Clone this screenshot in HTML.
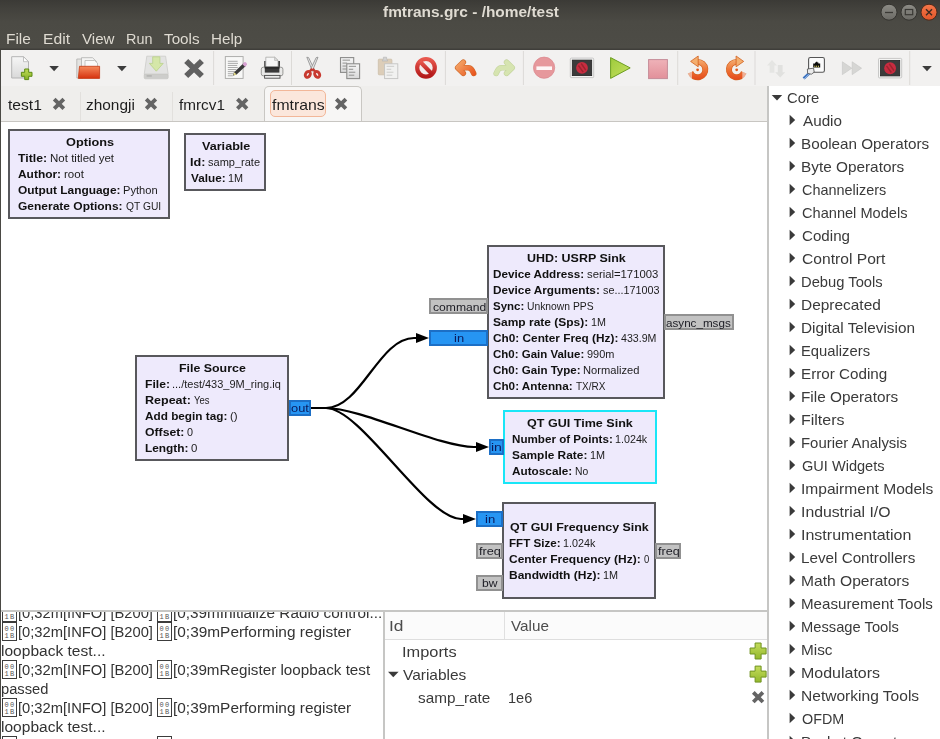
<!DOCTYPE html>
<html>
<head>
<meta charset="utf-8">
<title>fmtrans.grc - /home/test</title>
<style>
html,body{margin:0;padding:0;}
html{overflow:hidden;width:940px;height:739px;}
#root{position:absolute;left:0;top:0;width:940px;height:739px;overflow:hidden;}
body{width:940px;height:739px;position:relative;overflow:hidden;background:#f2f1f0;font-family:"Liberation Sans",sans-serif;}
.a{position:absolute;}
.tx{position:absolute;white-space:pre;line-height:20px;transform-origin:0 0;font-family:"Liberation Sans",sans-serif;}
.tx b{font-weight:bold;}
#titlebar{left:0;top:0;width:940px;height:50px;background:linear-gradient(#3b3a36 0px,#42413c 8px,#4b4a44 22px,#4d4c46 47.5px,#3f3e3a 49.5px,#3d3c38 50px);}
#toolbar{left:0;top:50px;width:940px;height:36px;background:#f2f1f0;}
#tabbar{left:0;top:86px;width:768px;height:35px;background:#efeeec;}
#tabline{left:0;top:121px;width:768px;height:1px;background:#c8c6c2;}
#canvas{left:1px;top:122px;width:766px;height:488px;background:#fff;}
#leftedge{left:0;top:50px;width:1px;height:689px;background:#4a4944;}
.blk{box-sizing:border-box;background:#eeeafc;border:2px solid #58585c;}
.port{box-sizing:border-box;}
.pb{background:#2695f3;border:2px solid #1c6fc6;}
.pg{background:#c2c2c2;border:2px solid #919191;}
#right{left:769px;top:86px;width:171px;height:653px;background:#fff;}
#rightline{left:767px;top:86px;width:2px;height:653px;background:#c6c6c4;}
#hline{left:1px;top:610px;width:766px;height:2px;background:#c6c6c4;}
#console{left:1px;top:612px;width:382px;height:127px;background:#fff;overflow:hidden;}
#vars{left:385px;top:612px;width:382px;height:127px;background:#fff;}
#varhead{left:385px;top:612px;width:382px;height:27px;background:#fbfbfb;border-bottom:1px solid #dedede;}
.sep{width:1px;top:51px;height:34px;background:#dddbd8;}
.hb{box-sizing:border-box;border:1.2px solid #3c3c3c;width:14.8px;height:18.6px;}
.hb i{position:absolute;left:0;width:12.4px;text-align:center;font-style:normal;font-family:"Liberation Mono",monospace;font-size:7px;line-height:6px;color:#555;letter-spacing:1.4px;padding-left:1.2px;box-sizing:border-box;}
</style>
</head>
<body>
<div id="root">
<div id="titlebar" class="a"></div>
<div id="toolbar" class="a"></div>
<div id="tabbar" class="a"></div>
<div id="tabline" class="a"></div>
<!-- active tab -->
<div class="a" style="left:264px;top:86px;width:98px;height:35px;box-sizing:border-box;background:#f7f6f5;border:1px solid #c9c7c3;border-bottom:none;border-radius:5px 5px 0 0"></div>
<div class="a" style="left:270px;top:90px;width:56px;height:27px;box-sizing:border-box;background:#fbe7dc;border:1px solid #f2b799;border-radius:5px"></div>
<div class="a" style="left:80px;top:92px;width:1px;height:29px;background:#e2e0dd"></div>
<div class="a" style="left:172px;top:92px;width:1px;height:29px;background:#e2e0dd"></div>
<div id="canvas" class="a"></div>
<div id="hline" class="a"></div>

<!-- blocks -->
<div class="a blk" style="left:8px;top:129px;width:162px;height:90px"></div>
<div class="a blk" style="left:184px;top:133px;width:82px;height:58px"></div>
<div class="a blk" style="left:135px;top:355px;width:154px;height:106px"></div>
<div class="a blk" style="left:487px;top:245px;width:178px;height:154px"></div>
<div class="a blk" style="left:503px;top:410px;width:154px;height:74px;border-color:#19e6f7"></div>
<div class="a blk" style="left:502px;top:502px;width:154px;height:97px"></div>
<!-- ports -->
<div class="a port pb" style="left:289px;top:400px;width:22px;height:16px"></div>
<div class="a port pg" style="left:429px;top:298px;width:59px;height:16px"></div>
<div class="a port pb" style="left:429px;top:330px;width:59px;height:16px"></div>
<div class="a port pg" style="left:664px;top:314px;width:70px;height:16px"></div>
<div class="a port pb" style="left:489px;top:439px;width:15px;height:16px"></div>
<div class="a port pb" style="left:476px;top:511px;width:27px;height:16px"></div>
<div class="a port pg" style="left:476px;top:543px;width:27px;height:16px"></div>
<div class="a port pg" style="left:476px;top:575px;width:27px;height:16px"></div>
<div class="a port pg" style="left:655px;top:543px;width:26px;height:16px"></div>
<!-- connections -->
<svg class="a" style="left:0;top:0" width="940" height="739" viewBox="0 0 940 739">
<g fill="none" stroke="#000" stroke-width="2.2">
<path d="M311 408 L326 408 C361 408 379 338 414 338 L417 338"/>
<path d="M311 408 L326 408 C361 408 439 447 474 447 L477 447"/>
<path d="M311 408 L326 408 C361 408 426 519 461 519 L464 519"/>
</g>
<g fill="#000">
<path d="M416 333 L429 338 L416 343 Z"/>
<path d="M476 442 L489 447 L476 452 Z"/>
<path d="M463 514 L476 519 L463 524 Z"/>
</g>
<!--DEBUG-->
</svg>

<!-- right tree panel -->
<div id="right" class="a"></div>
<div id="rightline" class="a"></div>
<!-- bottom panels -->
<div id="console" class="a"></div>
<div class="a" style="left:383px;top:611px;width:2px;height:128px;background:#c6c6c4"></div>
<div id="vars" class="a"></div>
<div id="varhead" class="a"></div>
<div class="a" style="left:504px;top:611px;width:1px;height:28px;background:#e0e0e0"></div>
<div id="leftedge" class="a"></div>

<svg class="a" style="left:870px;top:0" width="70" height="27" viewBox="870 0 70 27">
<defs>
<linearGradient id="gb" x1="0" y1="0" x2="0" y2="1"><stop offset="0" stop-color="#8d8c86"/><stop offset="1" stop-color="#6b6a65"/></linearGradient>
<linearGradient id="gc" x1="0" y1="0" x2="0" y2="1"><stop offset="0" stop-color="#f4774a"/><stop offset="1" stop-color="#e2562a"/></linearGradient>
</defs>
<circle cx="889" cy="12.2" r="8" fill="url(#gb)" stroke="#34332f" stroke-width="1"/>
<circle cx="909" cy="12.2" r="8" fill="url(#gb)" stroke="#34332f" stroke-width="1"/>
<circle cx="929" cy="12.2" r="8" fill="url(#gc)" stroke="#4a2a1c" stroke-width="1"/>
<path d="M885 12.5 H893" stroke="#3a3935" stroke-width="1.3" fill="none"/>
<rect x="905.3" y="9.5" width="7.4" height="5.2" fill="none" stroke="#3a3935" stroke-width="1.2"/>
<path d="M926 9.2 L932 15.2 M932 9.2 L926 15.2" stroke="#3a2a22" stroke-width="1.4" fill="none"/>
</svg>
<svg class="a" style="left:768px;top:86px" width="40" height="653" viewBox="768 86 40 653"><g fill="#3a3a3a"><path d="M771.7 95 L782.2 95 L777 100.4 Z"/><path d="M789.6 114.7 L795.2 120 L789.6 125.3 Z"/><path d="M789.6 137.7 L795.2 143 L789.6 148.3 Z"/><path d="M789.6 160.7 L795.2 166 L789.6 171.3 Z"/><path d="M789.6 183.7 L795.2 189 L789.6 194.3 Z"/><path d="M789.6 206.7 L795.2 212 L789.6 217.3 Z"/><path d="M789.6 229.7 L795.2 235 L789.6 240.3 Z"/><path d="M789.6 252.7 L795.2 258 L789.6 263.3 Z"/><path d="M789.6 275.7 L795.2 281 L789.6 286.3 Z"/><path d="M789.6 298.7 L795.2 304 L789.6 309.3 Z"/><path d="M789.6 321.7 L795.2 327 L789.6 332.3 Z"/><path d="M789.6 344.7 L795.2 350 L789.6 355.3 Z"/><path d="M789.6 367.7 L795.2 373 L789.6 378.3 Z"/><path d="M789.6 390.7 L795.2 396 L789.6 401.3 Z"/><path d="M789.6 413.7 L795.2 419 L789.6 424.3 Z"/><path d="M789.6 436.7 L795.2 442 L789.6 447.3 Z"/><path d="M789.6 459.7 L795.2 465 L789.6 470.3 Z"/><path d="M789.6 482.7 L795.2 488 L789.6 493.3 Z"/><path d="M789.6 505.7 L795.2 511 L789.6 516.3 Z"/><path d="M789.6 528.7 L795.2 534 L789.6 539.3 Z"/><path d="M789.6 551.7 L795.2 557 L789.6 562.3 Z"/><path d="M789.6 574.7 L795.2 580 L789.6 585.3 Z"/><path d="M789.6 597.7 L795.2 603 L789.6 608.3 Z"/><path d="M789.6 620.7 L795.2 626 L789.6 631.3 Z"/><path d="M789.6 643.7 L795.2 649 L789.6 654.3 Z"/><path d="M789.6 666.7 L795.2 672 L789.6 677.3 Z"/><path d="M789.6 689.7 L795.2 695 L789.6 700.3 Z"/><path d="M789.6 712.7 L795.2 718 L789.6 723.3 Z"/><path d="M789.6 735.7 L795.2 741 L789.6 746.3 Z"/></g></svg>
<svg class="a" style="left:386px;top:668px" width="16" height="14" viewBox="386 668 16 14"><path d="M388 671.8 L398.6 671.8 L393.3 677.3 Z" fill="#3a3a3a"/></svg>
<svg class="a" style="left:0;top:86px" width="768" height="653" viewBox="0 86 768 653"><path d="M54.2 99.10000000000001 L63.8 108.7 M63.8 99.10000000000001 L54.2 108.7" stroke="#646464" stroke-width="3.8" stroke-linecap="butt" fill="none"/><path d="M146.2 99.10000000000001 L155.8 108.7 M155.8 99.10000000000001 L146.2 108.7" stroke="#646464" stroke-width="3.8" stroke-linecap="butt" fill="none"/><path d="M237.39999999999998 99.10000000000001 L247.0 108.7 M247.0 99.10000000000001 L237.39999999999998 108.7" stroke="#646464" stroke-width="3.8" stroke-linecap="butt" fill="none"/><path d="M336.3 99.10000000000001 L345.90000000000003 108.7 M345.90000000000003 99.10000000000001 L336.3 108.7" stroke="#646464" stroke-width="3.8" stroke-linecap="butt" fill="none"/><path d="M753.3000000000001 692.4000000000001 L762.9 702.0 M762.9 692.4000000000001 L753.3000000000001 702.0" stroke="#646464" stroke-width="3.8" stroke-linecap="butt" fill="none"/><defs><linearGradient id="gp" x1="0" y1="0" x2="0" y2="1"><stop offset="0" stop-color="#c4dc5c"/><stop offset="1" stop-color="#93b82c"/></linearGradient></defs><path d="M755.1 643 H761.1 V648 H766.1 V654 H761.1 V659 H755.1 V654 H750.1 V648 H755.1 Z" fill="url(#gp)" stroke="#6f9320" stroke-width="1" stroke-linejoin="round"/><path d="M755.1 666.1 H761.1 V671.1 H766.1 V677.1 H761.1 V682.1 H755.1 V677.1 H750.1 V671.1 H755.1 Z" fill="url(#gp)" stroke="#6f9320" stroke-width="1" stroke-linejoin="round"/></svg>
<div class="a hb" style="left:2.3px;top:603.1px"><i style="top:2.6px">00</i><i style="top:10.4px">1B</i></div>
<div class="a hb" style="left:157.2px;top:603.1px"><i style="top:2.6px">00</i><i style="top:10.4px">1B</i></div>
<div class="a hb" style="left:2.3px;top:622.1px"><i style="top:2.6px">00</i><i style="top:10.4px">1B</i></div>
<div class="a hb" style="left:157.2px;top:622.1px"><i style="top:2.6px">00</i><i style="top:10.4px">1B</i></div>
<div class="a hb" style="left:2.3px;top:660.1px"><i style="top:2.6px">00</i><i style="top:10.4px">1B</i></div>
<div class="a hb" style="left:157.2px;top:660.1px"><i style="top:2.6px">00</i><i style="top:10.4px">1B</i></div>
<div class="a hb" style="left:2.3px;top:698.1px"><i style="top:2.6px">00</i><i style="top:10.4px">1B</i></div>
<div class="a hb" style="left:157.2px;top:698.1px"><i style="top:2.6px">00</i><i style="top:10.4px">1B</i></div>
<div class="a hb" style="left:2.3px;top:736.1px"><i style="top:2.6px">00</i><i style="top:10.4px">1B</i></div>
<div class="a hb" style="left:157.2px;top:736.1px"><i style="top:2.6px">00</i><i style="top:10.4px">1B</i></div><svg class="a" style="left:0;top:50px" width="940" height="36" viewBox="0 50 940 36">
<defs>
<linearGradient id="pg" x1="0" y1="0" x2="0" y2="1"><stop offset="0" stop-color="#f6f6f6"/><stop offset="1" stop-color="#d9d9d9"/></linearGradient>
<linearGradient id="gr" x1="0" y1="0" x2="0" y2="1"><stop offset="0" stop-color="#c0dc58"/><stop offset="1" stop-color="#86b024"/></linearGradient>
<linearGradient id="fo" x1="0" y1="0" x2="0" y2="1"><stop offset="0" stop-color="#f58a5c"/><stop offset="1" stop-color="#d6320e"/></linearGradient>
<linearGradient id="or" x1="0" y1="0" x2="0" y2="1"><stop offset="0" stop-color="#f7a463"/><stop offset="1" stop-color="#de4a10"/></linearGradient>
<linearGradient id="rd" x1="0" y1="0" x2="0" y2="1"><stop offset="0" stop-color="#e8584e"/><stop offset="1" stop-color="#b41a1a"/></linearGradient>
<linearGradient id="pk" x1="0" y1="0" x2="0" y2="1"><stop offset="0" stop-color="#efb2b8"/><stop offset="1" stop-color="#e2909a"/></linearGradient>
<linearGradient id="dr" x1="0" y1="0" x2="0" y2="1"><stop offset="0" stop-color="#e9e9e7"/><stop offset="1" stop-color="#d0d0ce"/></linearGradient>
<linearGradient id="pl" x1="0" y1="0" x2="1" y2="1"><stop offset="0" stop-color="#9ecb3c"/><stop offset="1" stop-color="#c6e060"/></linearGradient>
</defs>
<rect x="213.1" y="51" width="1" height="34" fill="#dcdad7"/>
<rect x="291.0" y="51" width="1" height="34" fill="#dcdad7"/>
<rect x="444.9" y="51" width="1" height="34" fill="#dcdad7"/>
<rect x="522.9" y="51" width="1" height="34" fill="#dcdad7"/>
<rect x="677.2" y="51" width="1" height="34" fill="#dcdad7"/>
<rect x="754.5" y="51" width="1" height="34" fill="#dcdad7"/>
<rect x="909.2" y="51" width="1" height="34" fill="#dcdad7"/>
<path d="M49.300000000000004 66 L58.9 66 L54.1 71.2 Z" fill="#3c3c3c"/>
<path d="M117.10000000000001 66 L126.7 66 L121.9 71.2 Z" fill="#3c3c3c"/>
<path d="M922.2 66 L931.8 66 L927 71.2 Z" fill="#3c3c3c"/>
<path d="M11.7 56.7 H23.5 L28.5 61.7 V78 H11.7 Z" fill="url(#pg)" stroke="#b4b4b4" stroke-width="1"/>
<path d="M23.5 56.7 V61.7 H28.5 Z" fill="#fff" stroke="#b4b4b4" stroke-width="0.8"/>
<path d="M24.7 69.0 H28.7 V72.3 H32.0 V76.3 H28.7 V79.6 H24.7 V76.3 H21.4 V72.3 H24.7 Z" fill="url(#gr)" stroke="#5c8a14" stroke-width="1" stroke-linejoin="round"/>
<path d="M76.8 59 H83 V78 H76.8 Z" fill="#e4e4e2" stroke="#b0b0ae" stroke-width="0.8"/>
<path d="M81.5 57.7 H92.5 L96.5 61.5 V70 H81.5 Z" fill="#f4f4f3" stroke="#b0b0ae" stroke-width="0.8"/>
<path d="M85 60.5 H94.5 L97.5 63 V70 H85 Z" fill="#fafafa" stroke="#b8b8b6" stroke-width="0.8"/>
<path d="M79.5 66.3 H99.6 V78.4 H78.3 Z" fill="url(#fo)" stroke="#c43a14" stroke-width="0.8" stroke-linejoin="round"/>
<path d="M146.8 56.2 H165.6 L168.2 74.4 H144.2 Z" fill="#e3e3e2" stroke="#cbcbc9" stroke-width="0.8" stroke-linejoin="round"/>
<rect x="144.2" y="74.2" width="24" height="4.6" rx="1.2" fill="#cdcdcb" stroke="#c2c2c0" stroke-width="0.6"/>
<rect x="146.6" y="75.4" width="5.2" height="1.1" fill="#a9a9a7"/>
<path d="M152.7 56.8 H159.9 V63.4 H163.2 L156.3 71.2 L149.4 63.4 H152.7 Z" fill="#d5e7a8" stroke="#b9d08a" stroke-width="0.8" stroke-linejoin="round"/>
<path d="M186.2 61 L201.9 76 M201.9 61 L186.2 76" stroke="#606060" stroke-width="5.8" stroke-linecap="butt" fill="none"/>
<rect x="225.3" y="56.6" width="17.8" height="21.8" fill="#f8f8f7" stroke="#a6a6a4" stroke-width="0.9"/>
<rect x="227.8" y="60.80" width="9.8" height="0.9" fill="#a2a2a2"/>
<rect x="227.8" y="62.88" width="10.2" height="0.9" fill="#a2a2a2"/>
<rect x="227.8" y="64.96" width="9.4" height="0.9" fill="#a2a2a2"/>
<rect x="227.8" y="67.04" width="10" height="0.9" fill="#a2a2a2"/>
<rect x="227.8" y="69.12" width="8.6" height="0.9" fill="#a2a2a2"/>
<rect x="227.8" y="71.20" width="7.6" height="0.9" fill="#a2a2a2"/>
<rect x="227.8" y="73.28" width="6.2" height="0.9" fill="#a2a2a2"/>
<rect x="227.8" y="75.36" width="5.0" height="0.9" fill="#a2a2a2"/>
<path d="M233.2 75.4 L234.2 72.2 L243.4 63.2 L246 65.8 L236.6 74.6 Z" fill="#3a3a3a"/>
<path d="M242.4 64.2 L244.6 62.1 C245.4 61.6 247.6 63.8 247 64.7 L245 66.8 Z" fill="#d8a2d2"/>
<path d="M233.2 75.4 L234.2 72.2 L236.6 74.6 Z" fill="#ece48a"/>
<path d="M233.2 75.4 L233.6 74.2 L234.5 75 Z" fill="#333"/>
<rect x="264.2" y="61" width="2.2" height="7" fill="#404040"/><rect x="277.8" y="61" width="2.2" height="7" fill="#404040"/>
<path d="M265.8 57.2 H274.6 L278 60.4 V67.4 H265.8 Z" fill="#f6f6f6" stroke="#aaaaa8" stroke-width="0.8" stroke-linejoin="round"/>
<path d="M274.6 57.2 V60.4 H278 Z" fill="#e2e2e2" stroke="#aaaaa8" stroke-width="0.6" stroke-linejoin="round"/>
<rect x="261.3" y="67.2" width="21.6" height="8.6" rx="2" fill="#e9e9e8" stroke="#8e8e8c" stroke-width="0.9"/>
<rect x="264.8" y="66.8" width="14.6" height="5.8" fill="#3a3a3a"/>
<rect x="264.8" y="66.8" width="14.6" height="2" fill="#2a2a2a"/>
<rect x="264.6" y="75.4" width="15.4" height="2.8" fill="#ececec" stroke="#4a4a4a" stroke-width="0.9"/>
<path d="M306.8 57.2 L308.6 57.6 L314.4 69.6 L312.4 71 Z" fill="#e6e6e6" stroke="#8a8a8a" stroke-width="0.8" stroke-linejoin="round"/>
<path d="M318 57.2 L316.2 57.6 L310.4 69.6 L312.4 71 Z" fill="#e6e6e6" stroke="#8a8a8a" stroke-width="0.8" stroke-linejoin="round"/>
<path d="M312.4 69 L309.6 71.4 M312.4 69 L315.2 71.4" stroke="#c4382e" stroke-width="2.4" fill="none"/>
<ellipse cx="307.8" cy="74.4" rx="2.3" ry="3.1" fill="none" stroke="#c83a30" stroke-width="2.9" transform="rotate(32 307.8 74.4)"/>
<ellipse cx="317.2" cy="74.4" rx="2.3" ry="3.1" fill="none" stroke="#c83a30" stroke-width="2.9" transform="rotate(-32 317.2 74.4)"/>
<rect x="340.5" y="57.6" width="13.2" height="14.8" fill="url(#pg)" stroke="#8c8c8a" stroke-width="1.1"/><rect x="342.5" y="59.60" width="7.54" height="1.1" fill="#9a9a98"/><rect x="342.5" y="62.55" width="4.60" height="1.1" fill="#9a9a98"/><rect x="342.5" y="65.50" width="6.81" height="1.1" fill="#9a9a98"/><rect x="342.5" y="68.45" width="5.70" height="1.1" fill="#9a9a98"/>
<rect x="346.8" y="63.8" width="12.8" height="14.8" fill="url(#pg)" stroke="#8c8c8a" stroke-width="1.1"/><rect x="348.8" y="65.80" width="7.22" height="1.1" fill="#9a9a98"/><rect x="348.8" y="68.75" width="4.40" height="1.1" fill="#9a9a98"/><rect x="348.8" y="71.70" width="6.51" height="1.1" fill="#9a9a98"/><rect x="348.8" y="74.65" width="5.46" height="1.1" fill="#9a9a98"/>
<rect x="378.3" y="59.2" width="13.6" height="15.6" rx="0.8" fill="#dccdb8" stroke="#cdbfaa" stroke-width="0.8"/>
<path d="M383.4 57.2 H386.6 V58.8 L387.8 61 H382.2 L383.4 58.8 Z" fill="#d2d2d2" stroke="#b4b4b4" stroke-width="0.6"/>
<rect x="384.6" y="63.8" width="13.2" height="14.8" fill="#f1f1f0" stroke="#c4c4c2" stroke-width="0.9"/><rect x="386.6" y="65.80" width="7.54" height="1.1" fill="#d0d0ce"/><rect x="386.6" y="68.75" width="4.60" height="1.1" fill="#d0d0ce"/><rect x="386.6" y="71.70" width="6.81" height="1.1" fill="#d0d0ce"/><rect x="386.6" y="74.65" width="5.70" height="1.1" fill="#d0d0ce"/>
<circle cx="426" cy="67.8" r="8.8" fill="#f3ecec" stroke="url(#rd)" stroke-width="4.2"/>
<path d="M419.8 61.4 L432.2 74.2" stroke="url(#rd)" stroke-width="4.2" fill="none"/>
<defs><linearGradient id="ug" gradientUnits="userSpaceOnUse" x1="456" y1="60" x2="474" y2="77"><stop offset="0" stop-color="#f6b070"/><stop offset="1" stop-color="#e8501a"/></linearGradient></defs>
<path d="M463.3 62.3 L457.7 67.7 L463.3 73.3 M459 67.7 L468.4 67.7 C471.2 67.9 472.4 69.8 473.7 73.4" fill="none" stroke="#cf6a2a" stroke-width="5.6" stroke-linecap="round" stroke-linejoin="round"/>
<path d="M463.3 62.3 L457.7 67.7 L463.3 73.3 M459 67.7 L468.4 67.7 C471.2 67.9 472.4 69.8 473.7 73.4" fill="none" stroke="url(#ug)" stroke-width="4.4" stroke-linecap="round" stroke-linejoin="round"/>
<g transform="translate(969.9 0) scale(-1 1)"><path d="M463.3 62.3 L457.7 67.7 L463.3 73.3 M459 67.7 L468.4 67.7 C471.2 67.9 472.4 69.8 473.7 73.4" fill="none" stroke="#c3d39c" stroke-width="5.6" stroke-linecap="round" stroke-linejoin="round"/></g>
<g transform="translate(969.9 0) scale(-1 1)"><path d="M463.3 62.3 L457.7 67.7 L463.3 73.3 M459 67.7 L468.4 67.7 C471.2 67.9 472.4 69.8 473.7 73.4" fill="none" stroke="#d6e4b0" stroke-width="4.4" stroke-linecap="round" stroke-linejoin="round"/></g>
<circle cx="544.1" cy="67.7" r="10.6" fill="#e6989c" stroke="#dc8a90" stroke-width="0.8"/>
<rect x="536.4" y="66.4" width="15.6" height="3.6" fill="#fdf6f6"/>
<rect x="570.3" y="58.1" width="23.40000000000009" height="19.499999999999993" rx="1" fill="#f4f4f3" stroke="#bdbdbb" stroke-width="0.8"/><rect x="572.3" y="60.1" width="19.40000000000009" height="15.499999999999993" fill="#3b3b3b" stroke="#222" stroke-width="0.8"/><circle cx="582.0" cy="67.94999999999999" r="5.9" fill="#c82c40"/><path d="M578.4 65.54999999999998 L583.2 72.14999999999999 M581.2 63.54999999999999 L585.8 70.14999999999999" stroke="#8c2228" stroke-width="1.5" opacity="0.75"/>
<rect x="878.5" y="58.4" width="23.200000000000045" height="19.500000000000007" rx="1" fill="#f4f4f3" stroke="#bdbdbb" stroke-width="0.8"/><rect x="880.5" y="60.4" width="19.200000000000045" height="15.500000000000007" fill="#3b3b3b" stroke="#222" stroke-width="0.8"/><circle cx="890.1" cy="68.25" r="5.9" fill="#c82c40"/><path d="M886.5 65.85 L891.3000000000001 72.45 M889.3000000000001 63.85 L893.9 70.45" stroke="#8c2228" stroke-width="1.5" opacity="0.75"/>
<path d="M610.6 57.6 L630.2 67.9 L610.6 78.4 Z" fill="url(#pl)" stroke="#6d9e22" stroke-width="1" stroke-linejoin="round"/>
<rect x="648.6" y="59.6" width="18.8" height="19" fill="url(#pk)" stroke="#c58c98" stroke-width="1"/>
<defs><linearGradient id="rg" gradientUnits="userSpaceOnUse" x1="0" y1="57" x2="0" y2="80"><stop offset="0" stop-color="#f6bc80"/><stop offset="0.55" stop-color="#ee7436"/><stop offset="1" stop-color="#e4481a"/></linearGradient><linearGradient id="rf" gradientUnits="userSpaceOnUse" x1="697" y1="0" x2="688" y2="0"><stop offset="0" stop-color="#fff" stop-opacity="1"/><stop offset="1" stop-color="#fff" stop-opacity="0"/></linearGradient><mask id="rm" maskUnits="userSpaceOnUse" x="680" y="50" width="40" height="36"><rect x="680" y="50" width="40" height="36" fill="#fff"/><rect x="686" y="69.5" width="6" height="9" fill="#000" opacity="0.55"/></mask></defs>
<g ><g mask="url(#rm)"><path d="M697.6 61.89999999999999 A7.7 7.7 0 1 1 690.46 72.48" fill="none" stroke="#d2601e" stroke-width="6"/><path d="M697.6 61.89999999999999 A7.7 7.7 0 1 1 690.46 72.48" fill="none" stroke="url(#rg)" stroke-width="4.8"/></g><path d="M698.2 56 L698.2 66.8 L690.6 61.4 Z" fill="#f4ae6e" stroke="#d2601e" stroke-width="0.8" stroke-linejoin="round"/><circle cx="697.6" cy="69.8" r="1.4" fill="#e0581c"/></g>
<g transform="translate(1434.3 0) scale(-1 1)"><g mask="url(#rm)"><path d="M697.6 61.89999999999999 A7.7 7.7 0 1 1 690.46 72.48" fill="none" stroke="#d2601e" stroke-width="6"/><path d="M697.6 61.89999999999999 A7.7 7.7 0 1 1 690.46 72.48" fill="none" stroke="url(#rg)" stroke-width="4.8"/></g><path d="M698.2 56 L698.2 66.8 L690.6 61.4 Z" fill="#f4ae6e" stroke="#d2601e" stroke-width="0.8" stroke-linejoin="round"/><circle cx="697.6" cy="69.8" r="1.4" fill="#e0581c"/></g>
<path d="M772 60 L777 65.4 H774.4 V72.8 H769.6 V65.4 H767 Z" fill="#e5e5e3"/>
<path d="M780.2 77.6 L775.2 72.2 H777.8 V65 H782.6 V72.2 H785.2 Z" fill="#e1e1df"/>
<rect x="808.6" y="57.5" width="15.8" height="14.8" rx="1.8" fill="#fbfbfb" stroke="#555555" stroke-width="1.1"/>
<path d="M813.2 67.6 V63.4 H815 V62.4 H816 V61.8 H817.4 V62.4 H818.4 V63.4 H820.2 V67.6 Z" fill="#0c0c0c"/>
<rect x="814.4" y="65.6" width="0.9" height="1.6" fill="#d8cc60"/><rect x="816.2" y="65.6" width="0.9" height="1.6" fill="#d8cc60"/><rect x="818" y="65.6" width="0.9" height="1.6" fill="#d8cc60"/>
<path d="M803.6 78.6 L810 72.4" stroke="#3f74c0" stroke-width="2.8" fill="none"/>
<path d="M804 79 L810.4 72.8" stroke="#a9c6ec" stroke-width="0.8" fill="none"/>
<path d="M807.4 69 L813.6 68.2 L814.2 72.2 L811.4 74.2 L807.6 73.4 Z" fill="#ebebeb" stroke="#4e4e4e" stroke-width="0.8" stroke-linejoin="round"/>
<path d="M842.4 61.8 L851.8 68.2 L842.4 74.6 Z" fill="#d6d6d4" stroke="#c6c6c4" stroke-width="0.6"/>
<path d="M852.2 61.8 L861.6 68.2 L852.2 74.6 Z" fill="#d6d6d4" stroke="#c6c6c4" stroke-width="0.6"/>
</svg>
<span class="tx" style="left:383.30px;top:1.98px;font-size:14.5px;font-weight:700;color:#dfdbd2;transform:scaleX(1.0647)">fmtrans.grc - /home/test</span>
<span class="tx" style="left:6.24px;top:28.94px;font-size:14.6px;font-weight:400;color:#dfdbd2;transform:scaleX(1.0590)">File</span>
<span class="tx" style="left:42.52px;top:28.94px;font-size:14.6px;font-weight:400;color:#dfdbd2;transform:scaleX(1.0747)">Edit</span>
<span class="tx" style="left:82.44px;top:28.94px;font-size:14.6px;font-weight:400;color:#dfdbd2;transform:scaleX(1.0350)">View</span>
<span class="tx" style="left:126.33px;top:28.94px;font-size:14.6px;font-weight:400;color:#dfdbd2;transform:scaleX(0.9853)">Run</span>
<span class="tx" style="left:164.17px;top:28.94px;font-size:14.6px;font-weight:400;color:#dfdbd2;transform:scaleX(1.0456)">Tools</span>
<span class="tx" style="left:211.26px;top:28.94px;font-size:14.6px;font-weight:400;color:#dfdbd2;transform:scaleX(1.0431)">Help</span>
<span class="tx" style="left:8.10px;top:94.94px;font-size:14.6px;font-weight:400;color:#1e1e1e;transform:scaleX(1.0721)">test1</span>
<span class="tx" style="left:86.41px;top:94.94px;font-size:14.6px;font-weight:400;color:#1e1e1e;transform:scaleX(1.0565)">zhongji</span>
<span class="tx" style="left:179.20px;top:94.94px;font-size:14.6px;font-weight:400;color:#1e1e1e;transform:scaleX(1.0482)">fmrcv1</span>
<span class="tx" style="left:271.70px;top:94.94px;font-size:14.6px;font-weight:400;color:#1e1e1e;transform:scaleX(1.0812)">fmtrans</span>
<span class="tx" style="left:787.00px;top:87.94px;font-size:14.6px;font-weight:400;color:#3a3a3a;transform:scaleX(1.0153)">Core</span>
<span class="tx" style="left:802.60px;top:110.94px;font-size:14.6px;font-weight:400;color:#3a3a3a;transform:scaleX(1.0440)">Audio</span>
<span class="tx" style="left:801.36px;top:133.94px;font-size:14.6px;font-weight:400;color:#3a3a3a;transform:scaleX(1.0457)">Boolean Operators</span>
<span class="tx" style="left:801.35px;top:156.94px;font-size:14.6px;font-weight:400;color:#3a3a3a;transform:scaleX(1.0517)">Byte Operators</span>
<span class="tx" style="left:801.92px;top:179.94px;font-size:14.6px;font-weight:400;color:#3a3a3a;transform:scaleX(0.9889)">Channelizers</span>
<span class="tx" style="left:801.91px;top:202.94px;font-size:14.6px;font-weight:400;color:#3a3a3a;transform:scaleX(0.9997)">Channel Models</span>
<span class="tx" style="left:801.89px;top:225.94px;font-size:14.6px;font-weight:400;color:#3a3a3a;transform:scaleX(1.0371)">Coding</span>
<span class="tx" style="left:801.86px;top:248.94px;font-size:14.6px;font-weight:400;color:#3a3a3a;transform:scaleX(1.0706)">Control Port</span>
<span class="tx" style="left:801.40px;top:271.94px;font-size:14.6px;font-weight:400;color:#3a3a3a;transform:scaleX(1.0102)">Debug Tools</span>
<span class="tx" style="left:801.34px;top:294.94px;font-size:14.6px;font-weight:400;color:#3a3a3a;transform:scaleX(1.0578)">Deprecated</span>
<span class="tx" style="left:801.35px;top:317.94px;font-size:14.6px;font-weight:400;color:#3a3a3a;transform:scaleX(1.0515)">Digital Television</span>
<span class="tx" style="left:801.40px;top:340.94px;font-size:14.6px;font-weight:400;color:#3a3a3a;transform:scaleX(1.0137)">Equalizers</span>
<span class="tx" style="left:801.36px;top:363.94px;font-size:14.6px;font-weight:400;color:#3a3a3a;transform:scaleX(1.0416)">Error Coding</span>
<span class="tx" style="left:801.35px;top:386.94px;font-size:14.6px;font-weight:400;color:#3a3a3a;transform:scaleX(1.0515)">File Operators</span>
<span class="tx" style="left:801.30px;top:409.94px;font-size:14.6px;font-weight:400;color:#3a3a3a;transform:scaleX(1.0954)">Filters</span>
<span class="tx" style="left:801.39px;top:432.94px;font-size:14.6px;font-weight:400;color:#3a3a3a;transform:scaleX(1.0215)">Fourier Analysis</span>
<span class="tx" style="left:801.91px;top:455.94px;font-size:14.6px;font-weight:400;color:#3a3a3a;transform:scaleX(0.9979)">GUI Widgets</span>
<span class="tx" style="left:801.20px;top:478.94px;font-size:14.6px;font-weight:400;color:#3a3a3a;transform:scaleX(1.0667)">Impairment Models</span>
<span class="tx" style="left:801.18px;top:501.94px;font-size:14.6px;font-weight:400;color:#3a3a3a;transform:scaleX(1.0819)">Industrial I/O</span>
<span class="tx" style="left:801.16px;top:524.94px;font-size:14.6px;font-weight:400;color:#3a3a3a;transform:scaleX(1.0977)">Instrumentation</span>
<span class="tx" style="left:801.36px;top:547.94px;font-size:14.6px;font-weight:400;color:#3a3a3a;transform:scaleX(1.0438)">Level Controllers</span>
<span class="tx" style="left:801.33px;top:570.94px;font-size:14.6px;font-weight:400;color:#3a3a3a;transform:scaleX(1.0686)">Math Operators</span>
<span class="tx" style="left:801.37px;top:593.94px;font-size:14.6px;font-weight:400;color:#3a3a3a;transform:scaleX(1.0380)">Measurement Tools</span>
<span class="tx" style="left:801.40px;top:616.94px;font-size:14.6px;font-weight:400;color:#3a3a3a;transform:scaleX(1.0083)">Message Tools</span>
<span class="tx" style="left:801.35px;top:639.94px;font-size:14.6px;font-weight:400;color:#3a3a3a;transform:scaleX(1.0508)">Misc</span>
<span class="tx" style="left:801.30px;top:662.94px;font-size:14.6px;font-weight:400;color:#3a3a3a;transform:scaleX(1.0943)">Modulators</span>
<span class="tx" style="left:801.33px;top:685.94px;font-size:14.6px;font-weight:400;color:#3a3a3a;transform:scaleX(1.0658)">Networking Tools</span>
<span class="tx" style="left:801.92px;top:708.94px;font-size:14.6px;font-weight:400;color:#3a3a3a;transform:scaleX(0.9823)">OFDM</span>
<span class="tx" style="left:801.38px;top:731.94px;font-size:14.6px;font-weight:400;color:#3a3a3a;transform:scaleX(1.0310)">Packet Operators</span>
<span class="tx" style="left:389.44px;top:615.54px;font-size:14.6px;font-weight:400;color:#4c4c4c;transform:scaleX(1.1882)">Id</span>
<span class="tx" style="left:511.23px;top:615.54px;font-size:14.6px;font-weight:400;color:#4c4c4c;transform:scaleX(1.0457)">Value</span>
<span class="tx" style="left:401.93px;top:641.94px;font-size:14.6px;font-weight:400;color:#3a3a3a;transform:scaleX(1.1221)">Imports</span>
<span class="tx" style="left:403.33px;top:664.94px;font-size:14.6px;font-weight:400;color:#3a3a3a;transform:scaleX(1.0602)">Variables</span>
<span class="tx" style="left:417.91px;top:687.94px;font-size:14.6px;font-weight:400;color:#3a3a3a;transform:scaleX(1.0488)">samp_rate</span>
<span class="tx" style="left:508.04px;top:687.94px;font-size:14.6px;font-weight:400;color:#3a3a3a;transform:scaleX(0.9966)">1e6</span>
<span class="tx" style="left:17.70px;top:602.96px;font-size:14.7px;font-weight:400;color:#333;transform:scaleX(1.0017)">[0;32m[INFO] [B200]</span>
<span class="tx" style="left:172.96px;top:602.96px;font-size:14.7px;font-weight:400;color:#333;transform:scaleX(1.0420)">[0;39mInitialize Radio control...</span>
<span class="tx" style="left:17.70px;top:621.96px;font-size:14.7px;font-weight:400;color:#333;transform:scaleX(1.0017)">[0;32m[INFO] [B200]</span>
<span class="tx" style="left:172.95px;top:621.96px;font-size:14.7px;font-weight:400;color:#333;transform:scaleX(1.0491)">[0;39mPerforming register</span>
<span class="tx" style="left:17.70px;top:659.96px;font-size:14.7px;font-weight:400;color:#333;transform:scaleX(1.0017)">[0;32m[INFO] [B200]</span>
<span class="tx" style="left:172.96px;top:659.96px;font-size:14.7px;font-weight:400;color:#333;transform:scaleX(1.0365)">[0;39mRegister loopback test</span>
<span class="tx" style="left:17.70px;top:697.96px;font-size:14.7px;font-weight:400;color:#333;transform:scaleX(1.0017)">[0;32m[INFO] [B200]</span>
<span class="tx" style="left:172.95px;top:697.96px;font-size:14.7px;font-weight:400;color:#333;transform:scaleX(1.0491)">[0;39mPerforming register</span>
<span class="tx" style="left:1.11px;top:640.96px;font-size:14.7px;font-weight:400;color:#333;transform:scaleX(1.0580)">loopback test...</span>
<span class="tx" style="left:1.16px;top:678.96px;font-size:14.7px;font-weight:400;color:#333;transform:scaleX(1.0014)">passed</span>
<span class="tx" style="left:1.11px;top:716.96px;font-size:14.7px;font-weight:400;color:#333;transform:scaleX(1.0580)">loopback test...</span>
<span class="tx" style="left:65.61px;top:132.08px;font-size:11.3px;font-weight:700;color:#111;transform:scaleX(1.1258)">Options</span>
<span class="tx" style="left:201.63px;top:136.08px;font-size:11.3px;font-weight:700;color:#111;transform:scaleX(1.1156)">Variable</span>
<span class="tx" style="left:179.08px;top:358.08px;font-size:11.3px;font-weight:700;color:#111;transform:scaleX(1.0967)">File Source</span>
<span class="tx" style="left:526.71px;top:248.08px;font-size:11.3px;font-weight:700;color:#111;transform:scaleX(1.1033)">UHD: USRP Sink</span>
<span class="tx" style="left:526.81px;top:413.08px;font-size:11.3px;font-weight:700;color:#111;transform:scaleX(1.1116)">QT GUI Time Sink</span>
<span class="tx" style="left:510.12px;top:517.08px;font-size:11.3px;font-weight:700;color:#111;transform:scaleX(1.0994)">QT GUI Frequency Sink</span>
<span class="tx" style="left:290.50px;top:398.38px;font-size:11.3px;font-weight:400;color:#0a1a5c;transform:scaleX(1.1386)">out</span>
<span class="tx" style="left:432.53px;top:296.58px;font-size:11.3px;font-weight:400;color:#1c1c24;transform:scaleX(1.0732)">command</span>
<span class="tx" style="left:453.54px;top:328.08px;font-size:11.3px;font-weight:400;color:#0a1a5c;transform:scaleX(1.1471)">in</span>
<span class="tx" style="left:666.35px;top:312.58px;font-size:11.3px;font-weight:400;color:#1c1c24;transform:scaleX(1.0313)">async_msgs</span>
<span class="tx" style="left:491.17px;top:437.38px;font-size:11.3px;font-weight:400;color:#0a1a5c;transform:scaleX(1.2427)">in</span>
<span class="tx" style="left:484.73px;top:509.38px;font-size:11.3px;font-weight:400;color:#0a1a5c;transform:scaleX(1.1607)">in</span>
<span class="tx" style="left:479.16px;top:541.08px;font-size:11.3px;font-weight:400;color:#1c1c24;transform:scaleX(1.1276)">freq</span>
<span class="tx" style="left:481.96px;top:573.08px;font-size:11.3px;font-weight:400;color:#1c1c24;transform:scaleX(1.0737)">bw</span>
<span class="tx" style="left:657.86px;top:541.08px;font-size:11.3px;font-weight:400;color:#1c1c24;transform:scaleX(1.1115)">freq</span>
<span class="tx" style="left:18.36px;top:148.08px;font-size:11.3px;font-weight:700;color:#111;transform:scaleX(1.0865)">Title:</span>
<span class="tx" style="left:49.91px;top:148.08px;font-size:11.3px;font-weight:400;color:#1c1c1c;transform:scaleX(1.0200)">Not titled yet</span>
<span class="tx" style="left:18.24px;top:164.08px;font-size:11.3px;font-weight:700;color:#111;transform:scaleX(1.0566)">Author:</span>
<span class="tx" style="left:63.94px;top:164.08px;font-size:11.3px;font-weight:400;color:#1c1c1c;transform:scaleX(1.0191)">root</span>
<span class="tx" style="left:18.04px;top:180.08px;font-size:11.3px;font-weight:700;color:#111;transform:scaleX(1.0535)">Output Language:</span>
<span class="tx" style="left:123.04px;top:180.08px;font-size:11.3px;font-weight:400;color:#1c1c1c;transform:scaleX(0.9856)">Python</span>
<span class="tx" style="left:18.04px;top:196.08px;font-size:11.3px;font-weight:700;color:#111;transform:scaleX(1.0612)">Generate Options:</span>
<span class="tx" style="left:125.55px;top:196.08px;font-size:11.3px;font-weight:400;color:#1c1c1c;transform:scaleX(0.9089)">QT GUI</span>
<span class="tx" style="left:189.76px;top:152.08px;font-size:11.3px;font-weight:700;color:#111;transform:scaleX(1.1186)">Id:</span>
<span class="tx" style="left:208.20px;top:152.08px;font-size:11.3px;font-weight:400;color:#1c1c1c;transform:scaleX(0.9752)">samp_rate</span>
<span class="tx" style="left:190.54px;top:168.08px;font-size:11.3px;font-weight:700;color:#111;transform:scaleX(1.0389)">Value:</span>
<span class="tx" style="left:227.72px;top:168.08px;font-size:11.3px;font-weight:400;color:#1c1c1c;transform:scaleX(0.9591)">1M</span>
<span class="tx" style="left:144.59px;top:374.08px;font-size:11.3px;font-weight:700;color:#111;transform:scaleX(1.0746)">File:</span>
<span class="tx" style="left:171.93px;top:374.08px;font-size:11.3px;font-weight:400;color:#1c1c1c;transform:scaleX(0.9729)">.../test/433_9M_ring.iq</span>
<span class="tx" style="left:144.57px;top:390.08px;font-size:11.3px;font-weight:700;color:#111;transform:scaleX(1.1081)">Repeat:</span>
<span class="tx" style="left:193.64px;top:390.08px;font-size:11.3px;font-weight:400;color:#1c1c1c;transform:scaleX(0.8400)">Yes</span>
<span class="tx" style="left:145.14px;top:406.08px;font-size:11.3px;font-weight:700;color:#111;transform:scaleX(1.0416)">Add begin tag:</span>
<span class="tx" style="left:230.20px;top:406.08px;font-size:11.3px;font-weight:400;color:#1c1c1c;transform:scaleX(1.0200)">()</span>
<span class="tx" style="left:144.93px;top:422.08px;font-size:11.3px;font-weight:700;color:#111;transform:scaleX(1.0832)">Offset:</span>
<span class="tx" style="left:187.28px;top:422.08px;font-size:11.3px;font-weight:400;color:#1c1c1c;transform:scaleX(0.9563)">0</span>
<span class="tx" style="left:144.61px;top:438.08px;font-size:11.3px;font-weight:700;color:#111;transform:scaleX(1.0507)">Length:</span>
<span class="tx" style="left:191.06px;top:438.08px;font-size:11.3px;font-weight:400;color:#1c1c1c;transform:scaleX(1.0115)">0</span>
<span class="tx" style="left:492.62px;top:264.08px;font-size:11.3px;font-weight:700;color:#111;transform:scaleX(1.0342)">Device Address:</span>
<span class="tx" style="left:587.29px;top:264.08px;font-size:11.3px;font-weight:400;color:#1c1c1c;transform:scaleX(0.9997)">serial=171003</span>
<span class="tx" style="left:492.62px;top:280.08px;font-size:11.3px;font-weight:700;color:#111;transform:scaleX(1.0419)">Device Arguments:</span>
<span class="tx" style="left:603.00px;top:280.08px;font-size:11.3px;font-weight:400;color:#1c1c1c;transform:scaleX(0.9575)">se...171003</span>
<span class="tx" style="left:493.08px;top:296.08px;font-size:11.3px;font-weight:700;color:#111;transform:scaleX(1.0142)">Sync:</span>
<span class="tx" style="left:526.96px;top:296.08px;font-size:11.3px;font-weight:400;color:#1c1c1c;transform:scaleX(0.9138)">Unknown PPS</span>
<span class="tx" style="left:493.07px;top:312.08px;font-size:11.3px;font-weight:700;color:#111;transform:scaleX(1.0610)">Samp rate (Sps):</span>
<span class="tx" style="left:590.93px;top:312.08px;font-size:11.3px;font-weight:400;color:#1c1c1c;transform:scaleX(0.9519)">1M</span>
<span class="tx" style="left:492.94px;top:328.08px;font-size:11.3px;font-weight:700;color:#111;transform:scaleX(1.0457)">Ch0: Center Freq (Hz):</span>
<span class="tx" style="left:621.47px;top:328.08px;font-size:11.3px;font-weight:400;color:#1c1c1c;transform:scaleX(0.9390)">433.9M</span>
<span class="tx" style="left:492.96px;top:344.08px;font-size:11.3px;font-weight:700;color:#111;transform:scaleX(1.0161)">Ch0: Gain Value:</span>
<span class="tx" style="left:587.12px;top:344.08px;font-size:11.3px;font-weight:400;color:#1c1c1c;transform:scaleX(0.9689)">990m</span>
<span class="tx" style="left:492.95px;top:360.08px;font-size:11.3px;font-weight:700;color:#111;transform:scaleX(1.0203)">Ch0: Gain Type:</span>
<span class="tx" style="left:583.04px;top:360.08px;font-size:11.3px;font-weight:400;color:#1c1c1c;transform:scaleX(0.9865)">Normalized</span>
<span class="tx" style="left:492.95px;top:376.08px;font-size:11.3px;font-weight:700;color:#111;transform:scaleX(1.0370)">Ch0: Antenna:</span>
<span class="tx" style="left:576.18px;top:376.08px;font-size:11.3px;font-weight:400;color:#1c1c1c;transform:scaleX(0.8841)">TX/RX</span>
<span class="tx" style="left:511.73px;top:429.08px;font-size:11.3px;font-weight:700;color:#111;transform:scaleX(1.0291)">Number of Points:</span>
<span class="tx" style="left:615.13px;top:429.08px;font-size:11.3px;font-weight:400;color:#1c1c1c;transform:scaleX(0.9502)">1.024k</span>
<span class="tx" style="left:512.17px;top:445.08px;font-size:11.3px;font-weight:700;color:#111;transform:scaleX(1.0527)">Sample Rate:</span>
<span class="tx" style="left:590.12px;top:445.08px;font-size:11.3px;font-weight:400;color:#1c1c1c;transform:scaleX(0.9591)">1M</span>
<span class="tx" style="left:512.24px;top:461.08px;font-size:11.3px;font-weight:700;color:#111;transform:scaleX(1.0418)">Autoscale:</span>
<span class="tx" style="left:575.00px;top:461.08px;font-size:11.3px;font-weight:400;color:#1c1c1c;transform:scaleX(0.9162)">No</span>
<span class="tx" style="left:508.93px;top:533.08px;font-size:11.3px;font-weight:700;color:#111;transform:scaleX(1.0270)">FFT Size:</span>
<span class="tx" style="left:563.13px;top:533.08px;font-size:11.3px;font-weight:400;color:#1c1c1c;transform:scaleX(0.9532)">1.024k</span>
<span class="tx" style="left:509.24px;top:549.08px;font-size:11.3px;font-weight:700;color:#111;transform:scaleX(1.0594)">Center Frequency (Hz):</span>
<span class="tx" style="left:643.93px;top:549.08px;font-size:11.3px;font-weight:400;color:#1c1c1c;transform:scaleX(0.8400)">0</span>
<span class="tx" style="left:508.90px;top:565.08px;font-size:11.3px;font-weight:700;color:#111;transform:scaleX(1.0635)">Bandwidth (Hz):</span>
<span class="tx" style="left:602.92px;top:565.08px;font-size:11.3px;font-weight:400;color:#1c1c1c;transform:scaleX(0.9591)">1M</span>
<div class="a" style="left:1px;top:598px;width:382px;height:12px;background:#fff"></div>
<div class="a" style="left:1px;top:610px;width:766px;height:2px;background:#c6c6c4"></div>
<div class="a" style="left:383px;top:612px;width:2px;height:127px;background:#c6c6c4"></div>
</div>
</body>
</html>
